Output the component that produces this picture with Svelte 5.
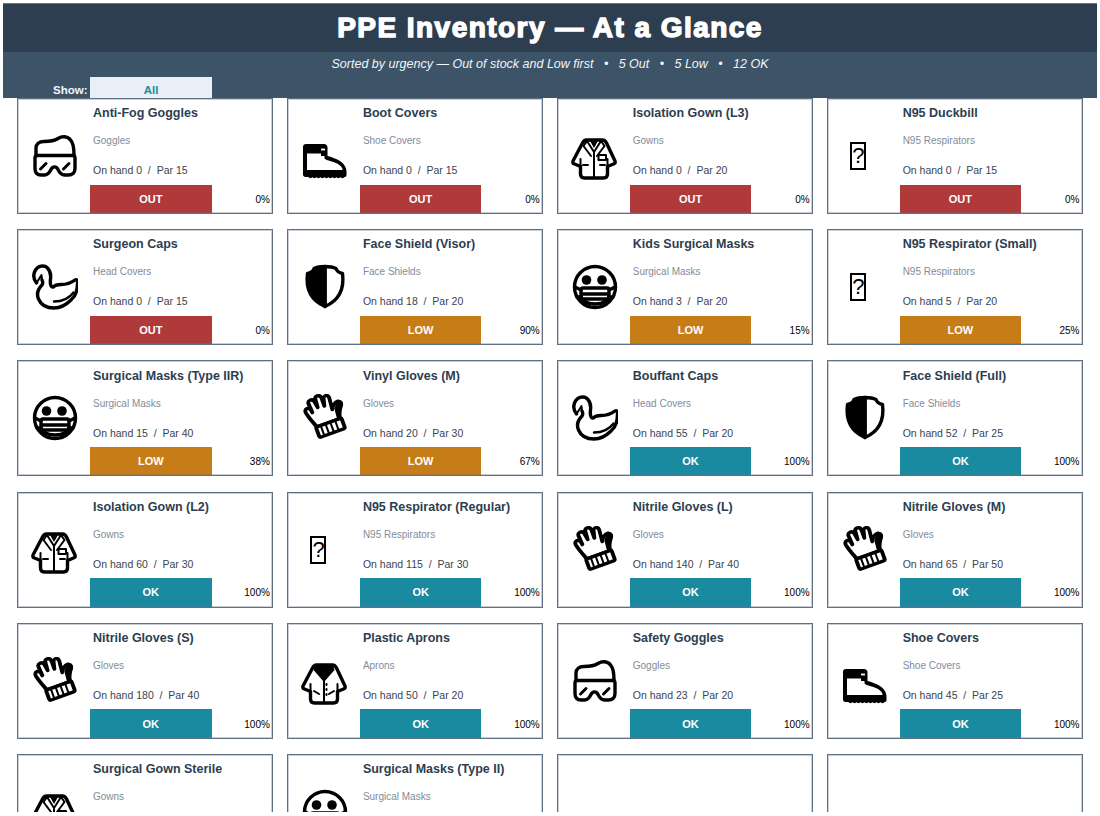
<script>
  const items = [
    { name: 'Anti-Fog Goggles', cat: 'Goggles', icon: 'goggles', onHand: 0, par: 15, status: 'OUT', pct: 0 },
    { name: 'Boot Covers', cat: 'Shoe Covers', icon: 'boot', onHand: 0, par: 15, status: 'OUT', pct: 0 },
    { name: 'Isolation Gown (L3)', cat: 'Gowns', icon: 'gown', onHand: 0, par: 20, status: 'OUT', pct: 0 },
    { name: 'N95 Duckbill', cat: 'N95 Respirators', icon: 'none', onHand: 0, par: 15, status: 'OUT', pct: 0 },
    { name: 'Surgeon Caps', cat: 'Head Covers', icon: 'swan', onHand: 0, par: 15, status: 'OUT', pct: 0 },
    { name: 'Face Shield (Visor)', cat: 'Face Shields', icon: 'shield', onHand: 18, par: 20, status: 'LOW', pct: 90 },
    { name: 'Kids Surgical Masks', cat: 'Surgical Masks', icon: 'mask', onHand: 3, par: 20, status: 'LOW', pct: 15 },
    { name: 'N95 Respirator (Small)', cat: 'N95 Respirators', icon: 'none', onHand: 5, par: 20, status: 'LOW', pct: 25 },
    { name: 'Surgical Masks (Type IIR)', cat: 'Surgical Masks', icon: 'mask', onHand: 15, par: 40, status: 'LOW', pct: 38 },
    { name: 'Vinyl Gloves (M)', cat: 'Gloves', icon: 'glove', onHand: 20, par: 30, status: 'LOW', pct: 67 },
    { name: 'Bouffant Caps', cat: 'Head Covers', icon: 'swan', onHand: 55, par: 20, status: 'OK', pct: 100 },
    { name: 'Face Shield (Full)', cat: 'Face Shields', icon: 'shield', onHand: 52, par: 25, status: 'OK', pct: 100 },
    { name: 'Isolation Gown (L2)', cat: 'Gowns', icon: 'gown', onHand: 60, par: 30, status: 'OK', pct: 100 },
    { name: 'N95 Respirator (Regular)', cat: 'N95 Respirators', icon: 'none', onHand: 115, par: 30, status: 'OK', pct: 100 },
    { name: 'Nitrile Gloves (L)', cat: 'Gloves', icon: 'glove', onHand: 140, par: 40, status: 'OK', pct: 100 },
    { name: 'Nitrile Gloves (M)', cat: 'Gloves', icon: 'glove', onHand: 65, par: 50, status: 'OK', pct: 100 },
    { name: 'Nitrile Gloves (S)', cat: 'Gloves', icon: 'glove', onHand: 180, par: 40, status: 'OK', pct: 100 },
    { name: 'Plastic Aprons', cat: 'Aprons', icon: 'apron', onHand: 50, par: 20, status: 'OK', pct: 100 },
    { name: 'Safety Goggles', cat: 'Goggles', icon: 'goggles', onHand: 23, par: 20, status: 'OK', pct: 100 },
    { name: 'Shoe Covers', cat: 'Shoe Covers', icon: 'boot', onHand: 45, par: 25, status: 'OK', pct: 100 },
    // the last row runs off the bottom of the panel, only name and category show
    { name: 'Surgical Gown Sterile', cat: 'Gowns', icon: 'gown' },
    { name: 'Surgical Masks (Type II)', cat: 'Surgical Masks', icon: 'mask' },
    {},
    {}
  ];
</script>

<div class="panel">
  <header class="title-bar"><h1>PPE Inventory — At a Glance</h1></header>
  <div class="sub-bar">
    <p>Sorted by urgency — Out of stock and Low first &nbsp; • &nbsp; 5 Out &nbsp; • &nbsp; 5 Low &nbsp; • &nbsp; 12 OK</p>
    <div class="filter">
      <span class="filter-label">Show:</span>
      <span class="filter-value">All</span>
    </div>
  </div>

  <div class="grid">
    {#each items as item}
      <div class="card">
        {#if item.name}
          <div class="icon">
            {#if item.icon === 'none'}
              <span class="tofu">?</span>
            {:else}
              <svg viewBox="0 0 48 48" width="48" height="48" fill="none" stroke="#000" stroke-width="3.4" stroke-linejoin="round" stroke-linecap="round">
                {#if item.icon === 'goggles'}
                  <path d="M6 23V16C6 12 9 9.500 14 9.500C20 9.500 24 9 28 6.500C32 4 37.500 4 40.500 8C43.500 11 44 17 44 23" />
                  <path d="M7.500 23.500H42.500C44 23.500 45 24.500 45 26V36.500C45 40.500 42.500 43 38.500 43H34.500C31 43 29.500 40.500 28 37.500C26.500 34 22.500 34 21 37.500C19.500 40.500 18 43 14.500 43H11C7 43 5 40.500 5 36.500V26C5 24.500 6 23.500 7.500 23.500Z" />
                  <path stroke-width="3" d="M10.500 37L16 31.500M33.500 37L39 31.500" />
                {:else if item.icon === 'boot'}
                  <path fill="#000" stroke="none" d="M6 12H24C26 12 27.500 13.500 27.500 15.500V24C33 25.500 40 28 43.500 32C45.500 34.500 46.500 37 46.500 40V43C46.500 44.500 45.500 45 44.500 45C44 46.500 41 46.500 40.500 45C40 46.500 37 46.500 36.500 45C36 46.500 33 46.500 32.500 45C32 46.500 29 46.500 28.500 45C28 46.500 25 46.500 24.500 45C24 46.500 21 46.500 20.500 45C20 46.500 17 46.500 16.500 45C16 46.500 13 46.500 12.500 45C12 46.500 9 46.500 8.500 45H5.500C4 45 3 44 3 42.500V15C3 13 4 12 6 12Z" />
                  <path fill="#fff" stroke="none" d="M7 21.500H21V24H24.500V26.500L26.500 28C32 29.500 38 31 40.500 34C42 35.500 42.500 36.500 42.500 38H7Z" />
                  <path stroke="#fff" stroke-width="1.800" stroke-linecap="butt" d="M21 17.500H25" />
                {:else if item.icon === 'gown' || item.icon === 'apron'}
                  <path d="M16.500 8H32.500C34.500 8 35.500 9 36.500 11L45 29C45.500 30.500 45 31.500 43.500 32L37.500 34.500V42C37.500 44.500 36 46 33.500 46H14.500C12 46 10.500 44.500 10.500 42V34.500L4.500 32C3 31.500 2.500 30.500 3 29L12.500 11C13.500 9 14.500 8 16.500 8Z" />
                  {#if item.icon === 'gown'}
                    <path stroke-width="2" d="M17 9L24 20L31 9M17 9L13.500 14L21 24M31 9L34.500 14L27 24" />
                    <path fill="#000" stroke="none" d="M19.500 8H28.500L24 16Z" />
                    <path stroke-width="2" d="M24 21V45M10.500 34V27M37.500 34V27M13 33H18M30 33H35" />
                    <path stroke-width="2" d="M28.500 23H36V28H28.500Z" />
                  {:else}
                    <path fill="#000" stroke="none" d="M15 8H33L34.500 13L24 25L13.500 13Z" />
                    <path stroke-width="2" d="M10.500 35V27M37.500 35V27M24 24V45M14 34L19 37M34 34L29 37" />
                    <path stroke-width="2" stroke-dasharray="1 4" d="M26.500 27V41" />
                  {/if}
                {:else if item.icon === 'swan'}
                  <path d="M6.500 20C3.500 16 3 11 5.500 7C8 3 14 1.500 17.500 5C20.500 8 21 12 20.500 16C20 20 20.500 25 23.500 24C25 22 27 21.500 31 21.500C37 21.500 41 20 45 17C47 16 48 18 47.500 20C47.500 27 46 33 41 37C36 42 30 45 24 45C17 45 11 42 8.500 36C6 30 9 25 12 22C13 20.500 13 19 12 17" />
                  <path stroke-width="2" d="M6.500 20L11.500 12L12 17" />
                  <path stroke-width="2.400" d="M24 38.500C31 38.500 38 37 43.500 29.500" />
                {:else if item.icon === 'shield'}
                  <path fill="#000" d="M25 3.500C21 3.500 17 4 14 5.500C13 8.500 10.500 10 7.500 10.500C6 22 8 36 25 43.500Z" />
                  <path d="M25 3.500C29 3.500 33 4 36 5.500C37 8.500 39.500 10 42.500 10.500C44 22 42 36 25 43.500Z" />
                {:else if item.icon === 'mask'}
                  <circle cx="25" cy="24" r="20.500" />
                  <circle cx="16.500" cy="17" r="4.800" fill="#000" stroke="none" />
                  <circle cx="32" cy="17" r="4.800" fill="#000" stroke="none" />
                  <path d="M13 25H37C38.500 25 39 26 39 27V33C39 37 34 41 25 41C16 41 11 37 11 33V27C11 26 11.500 25 13 25Z" fill="#fff" />
                  <path d="M11.500 31H38.500M12 36H38M11 27L5 24M39 27L45 24M11 34L7 34M39 34L43 34" />
                {:else if item.icon === 'glove'}
                  <g transform="translate(-3.500 -2) rotate(-20 24 24) scale(1.130 1)">
                    <path fill="#fff" d="M15 33C13 27 11 22 10 16C9.500 12 14 11 15 15L15.500 18L15 9C14.500 5 19.500 4.500 20.500 8L21.500 15L22 7C22 3 27 3 27.500 7L27.500 16L29 9C29.500 5.500 34 6 34 10L33 22C34 19 37 15.500 40 16C43 17 42.500 20 41 22C38 26 37 29 36.500 33Z" />
                    <path fill="#000" stroke="none" d="M35 22C37 18 40 15 42 16C44.500 18 43.500 21 42 23C39.500 27 38.500 30 38.500 34H34Z" />
                    <rect x="14" y="33" width="24" height="11" rx="1.500" fill="#fff" />
                    <path stroke-width="1.800" stroke-linecap="butt" d="M18.500 34V43M23 34V43M27.500 34V43M32 34V43" />
                  </g>
                {/if}
              </svg>
            {/if}
          </div>
          <div class="name">{item.name}</div>
          <div class="cat">{item.cat}</div>
          {#if item.status}
            <div class="stock">On hand {item.onHand} &nbsp;/&nbsp; Par {item.par}</div>
            <div class={`badge ${item.status.toLowerCase()}`}>{item.status}</div>
            <div class="pct">{item.pct}%</div>
          {/if}
        {/if}
      </div>
    {/each}
  </div>
</div>

<style>
  :global(body) {
    background: #fff;
    font-family: "Liberation Sans", Arial, sans-serif;
  }

  .panel {
    box-sizing: border-box;
    margin: 3px 3px 0;
    height: 809px;
    overflow: hidden;
  }

  .title-bar {
    height: 49px;
    display: flex;
    align-items: center;
    justify-content: center;
    background: #2c3e50;
    border-top: 1px solid #64748b;
    box-sizing: border-box;
  }

  h1 {
    margin: 0;
    color: #fff;
    font-size: 28px;
    font-weight: 700;
    letter-spacing: 1.45px;
    -webkit-text-stroke: 1.4px #fff;
  }

  .sub-bar {
    height: 46px;
    display: flex;
    flex-direction: column;
    background: #3d5368;
  }

  .sub-bar p {
    margin: 0;
    height: 25px;
    line-height: 24px;
    text-align: center;
    color: #f1f5f9;
    font-size: 12.500px;
    font-style: italic;
  }

  .filter {
    display: flex;
    align-items: stretch;
    height: 21px;
    padding-left: 50px;
  }

  .filter-label {
    width: 37px;
    line-height: 27px;
    color: #f1f5f9;
    font-size: 11.500px;
    font-weight: 700;
  }

  .filter-value {
    width: 122px;
    line-height: 27px;
    text-align: center;
    background: #e8eff7;
    color: #1a8aa0;
    font-size: 11.500px;
    font-weight: 700;
  }

  .grid {
    display: grid;
    grid-template-columns: repeat(4, 1fr);
    grid-auto-rows: 116px;
    column-gap: 14px;
    row-gap: 15.2px;
    padding: 0 14.500px 0 14px;
  }

  .card {
    box-sizing: border-box;
    display: grid;
    grid-template-columns: 72px 121.500px 1fr;
    grid-template-rows: repeat(4, 1fr);
    background: #fff;
    border: 1px solid #5f7082;
    outline: 1px solid rgba(100, 116, 139, 0.35);
    outline-offset: -2px;
    color: #2c3e50;
  }

  .icon {
    grid-column: 1;
    grid-row: 1 / 5;
    display: flex;
    align-items: center;
    justify-content: center;
  }

  .tofu {
    box-sizing: border-box;
    width: 16px;
    height: 28px;
    margin-left: -11px;
    border: 2px solid #000;
    color: #000;
    font-size: 22px;
    line-height: 24px;
    text-align: center;
  }

  .name, .cat, .stock {
    grid-column: 2 / 4;
    padding-left: 3px;
    display: flex;
    align-items: center;
    white-space: nowrap;
  }

  .name {
    grid-row: 1;
    font-size: 12.500px;
    font-weight: 700;
  }

  .cat {
    grid-row: 2;
    padding-bottom: 2px;
    font-size: 10px;
    color: #7f8c9c;
  }

  .stock {
    grid-row: 3;
    font-size: 10.500px;
    color: #3a4450;
  }

  .badge {
    grid-column: 2;
    grid-row: 4;
    display: flex;
    align-items: center;
    justify-content: center;
    color: #fff;
    font-size: 11px;
    font-weight: 700;
  }

  .out { background: #b03a3a; }
  .low { background: #c77d17; }
  .ok { background: #1a8aa0; }

  .pct {
    grid-column: 3;
    grid-row: 4;
    display: flex;
    align-items: center;
    justify-content: flex-end;
    padding-right: 2px;
    padding-top: 1px;
    color: #000;
    font-size: 10px;
  }
</style>
